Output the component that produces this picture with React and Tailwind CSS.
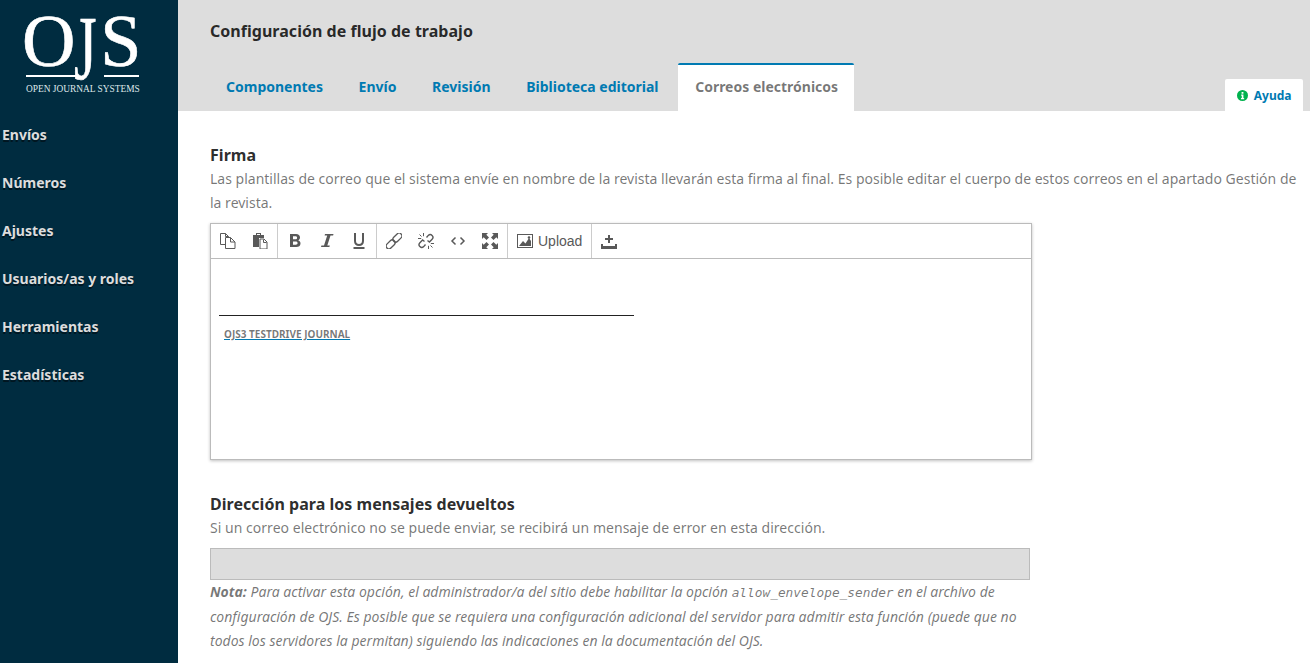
const navItems = ["Envíos", "Números", "Ajustes", "Usuarios/as y roles", "Herramientas", "Estadísticas"];
const tabs = ["Componentes", "Envío", "Revisión", "Biblioteca editorial"];

function Icon({ children }) {
  return (
    <svg width="16" height="16" viewBox="0 0 16 16" fill="#595959">
      {children}
    </svg>
  );
}

const CopyIcon = () => (
  <svg width="16" height="16" viewBox="0 0 16 16" fill="none" stroke="#595959">
    <path d="M5.500 11.500H.5v-11h5l3 3v1" />
    <path d="M5.500 .5v3h3" />
    <path d="M5.500 4.500h5l4.500 4.500v6.500H5.500z" />
    <path d="M10.500 4.500v4.500H15" />
  </svg>
);
const PasteIcon = () => (
  <Icon>
    <path fillRule="evenodd" d="M1 2h3V0h5v2h3v3H7v9H1zM5 1v1h3V1z" />
    <path d="M8 6h4l3 3v7H8z" fill="#fff" stroke="#595959" />
    <path d="M11.500 6.500v3h3" fill="none" stroke="#595959" />
  </Icon>
);
const BoldIcon = () => (
  <Icon>
    <path fillRule="evenodd" d="M3 1h6c2.500 0 4 1.300 4 3.400 0 1.400-.8 2.400-1.900 2.900 1.500.4 2.400 1.600 2.400 3.200 0 2.400-1.700 3.500-4.300 3.500H3zM6 3.200v3.100h2.400c1.100 0 1.700-.6 1.700-1.600s-.6-1.500-1.700-1.500zM6 8.400v3.400h2.700c1.200 0 1.900-.6 1.900-1.700s-.7-1.700-2-1.700z" />
  </Icon>
);
const ItalicIcon = () => (
  <Icon>
    <path d="M6 1h8.500l-.4 1.500h-2.600L8.300 12.500h2.500l-.4 1.500H2l.4-1.500h2.600L8.200 2.500H5.600z" />
  </Icon>
);
const UnderlineIcon = () => (
  <Icon>
    <path d="M3 0h2v8c0 2 1.200 3 3 3s3-1 3-3V0h2v8c0 3.200-2 5-5 5S3 11.200 3 8zM2.500 14h11v2h-11z" />
  </Icon>
);
const LinkIcon = () => (
  <svg width="16" height="16" viewBox="0 0 16 16" fill="none" stroke="#595959" strokeWidth="1.300">
    <rect x="8.600" y="-.6" width="5.600" height="10.400" rx="2.800" transform="rotate(45 11.400 4.600)" />
    <rect x="1.800" y="6.200" width="5.600" height="10.400" rx="2.800" transform="rotate(45 4.600 11.400)" />
  </svg>
);
const UnlinkIcon = () => (
  <svg width="16" height="16" viewBox="0 0 16 16" fill="none" stroke="#595959" strokeWidth="1.400">
    <path d="M8.500 4.500l1.800-2.100a2.700 2.700 0 0 1 3.800 0 2.700 2.700 0 0 1 0 3.800L11.400 9 9.500 7.500" />
    <path d="M7.500 11.500l-1.800 2.100a2.700 2.700 0 0 1-3.800 0 2.700 2.700 0 0 1 0-3.800L4.600 7l1.900 1.500" />
    <path d="M5.500 0v3.200M0 5.500h3.200M10.500 12.800V16M12.800 10.500H16M1.500 1.500l2 2M12.500 12.500l2 2" strokeWidth="1" />
  </svg>
);
const CodeIcon = () => (
  <svg width="16" height="16" viewBox="0 0 16 16" fill="none" stroke="#595959" strokeWidth="1.500">
    <path d="M5.500 4.500L2 8l3.500 3.500M10.500 4.500L14 8l-3.500 3.500" />
  </svg>
);
const FullscreenIcon = () => (
  <Icon>
    <path d="M0 0h6L4.300 1.700 7 4.500 4.500 7 1.700 4.300 0 6zM16 0v6l-1.700-1.700L11.500 7 9 4.500l2.700-2.800L10 0zM0 16v-6l1.700 1.700L4.500 9 7 11.500l-2.700 2.800L6 16zM16 16h-6l1.700-1.700L9 11.500 11.500 9l2.800 2.700L16 10z" />
  </Icon>
);
const ImageIcon = () => (
  <Icon>
    <path fillRule="evenodd" d="M0 1h16v14H0zM1 2v12h14V2z" />
    <path d="M2 13l4-5 2.500 2.500L12 5l2 3v5z" />
    <circle cx="12" cy="4.500" r="1.300" />
  </Icon>
);
const InsertIcon = () => (
  <Icon>
    <path d="M7 2h2v3h3v2H9v3H7V7H4V5h3zM0 11h2v2h12v-2h2v5H0z" />
  </Icon>
);

function ToolButton({ children }) {
  return <div className="flex h-[24px] w-[32px] items-center justify-center">{children}</div>;
}

function ToolGroup({ children, last }) {
  return (
    <div className={`flex h-full items-center px-[1px] ${last ? "" : "border-r border-[#ccc]"}`}>{children}</div>
  );
}

export default function App() {
  return (
    <div className="flex h-[663px] w-[1310px] overflow-hidden bg-white font-['Noto_Sans',sans-serif] text-[14px] text-[rgba(0,0,0,0.54)]">
      <aside className="w-[178px] shrink-0 bg-[#002c40]">
        <div className="flex h-[111px] flex-col pl-[26px] pt-[8px] text-white">
          <div className="flex h-[66px] font-['Liberation_Serif',serif] text-[74px] leading-[66px] [-webkit-text-stroke:0.6px_white]">
            <span className="-ml-[4px]">O</span>
            <span className="-ml-[1px] -mr-[3px] origin-top-left scale-x-[0.78] scale-y-[1.22]">J</span>
            <span>S</span>
          </div>
          <div className="flex w-[113px] justify-between pt-[1px]">
            <span className="h-[2px] w-[52px] bg-white" />
            <span className="h-[2px] w-[35px] bg-white" />
          </div>
          <div className="pt-[8px] font-['Liberation_Serif',serif] text-[9.400px] leading-[9px] whitespace-nowrap text-[#dfe7ea]">
            OPEN JOURNAL SYSTEMS
          </div>
        </div>
        <nav className="flex flex-col">
          {navItems.map((item) => (
            <a key={item} className="flex h-[48px] items-center pb-[2px] pl-[2px] text-[14px] font-bold text-[#ddd] [text-shadow:0_2px_0_rgba(0,0,0,0.5)]">
              {item}
            </a>
          ))}
        </nav>
      </aside>

      <div className="flex min-w-0 flex-1 flex-col">
        <header className="flex h-[111px] shrink-0 flex-col bg-[#ddd]">
          <h1 className="pl-[32px] pt-[21px] text-[16px] leading-[20px] font-bold tracking-[0.03px] text-[rgba(0,0,0,0.84)]">
            Configuración de flujo de trabajo
          </h1>
          <div className="mt-auto flex items-end justify-between">
            <div className="flex items-end pl-[32px]">
              {tabs.map((t) => (
                <a key={t} className="mr-[3.600px] flex h-[48px] items-center px-[16px] pb-[2px] text-[14px] font-bold text-[#007ab2]">
                  {t}
                </a>
              ))}
              <a className="flex h-[48px] items-center rounded-t-[2px] border-t-2 border-[#007ab2] bg-white pl-[17px] pr-[16px] pb-[4px] text-[14px] font-bold text-[rgba(0,0,0,0.54)]">
                Correos electrónicos
              </a>
            </div>
            <div className="mr-[7px] flex h-[32px] items-center gap-[6px] rounded-t-[2px] bg-white px-[11.500px] pt-[1px] text-[12px] font-bold text-[#007ab2]">
              <svg width="11" height="11" viewBox="0 0 12 12">
                <circle cx="6" cy="6" r="6" fill="#00b24e" />
                <path d="M5 2.200h2v1.800H5zM4.500 5h2.500v3.800h.8V10H4.300V8.800h.9V6.200h-.7z" fill="#fff" />
              </svg>
              Ayuda
            </div>
          </div>
        </header>

        <main className="pl-[32px] pr-[12px] pt-[33px]">
          <h2 className="mb-[1px] text-[16px] leading-[22px] font-bold tracking-[0.03px] text-[rgba(0,0,0,0.84)]">Firma</h2>
          <p className="leading-[24px] tracking-[0.006px]">
            Las plantillas de correo que el sistema envíe en nombre de la revista llevarán esta firma al final. Es posible editar el cuerpo de estos correos en el apartado Gestión de la revista.
          </p>

          <div className="mt-[8px] w-[822px] border border-[#bbb] shadow-[0_1px_3px_rgba(0,0,0,0.25)]">
            <div className="flex h-[35px] items-center border-b border-[#bbb]">
              <ToolGroup>
                <ToolButton><CopyIcon /></ToolButton>
                <ToolButton><PasteIcon /></ToolButton>
              </ToolGroup>
              <ToolGroup>
                <ToolButton><BoldIcon /></ToolButton>
                <ToolButton><ItalicIcon /></ToolButton>
                <ToolButton><UnderlineIcon /></ToolButton>
              </ToolGroup>
              <ToolGroup>
                <ToolButton><LinkIcon /></ToolButton>
                <ToolButton><UnlinkIcon /></ToolButton>
                <ToolButton><CodeIcon /></ToolButton>
                <ToolButton><FullscreenIcon /></ToolButton>
              </ToolGroup>
              <ToolGroup>
                <div className="flex items-center gap-[5px] px-[8px] font-['Liberation_Sans',sans-serif] text-[14px] text-[#595959]">
                  <ImageIcon />
                  Upload
                </div>
              </ToolGroup>
              <ToolGroup last>
                <ToolButton><InsertIcon /></ToolButton>
              </ToolGroup>
            </div>
            <div className="h-[200px] px-[8px] pt-[56px]">
              <div className="h-[1px] w-[415px] bg-[#222]" />
              <p className="pl-[5px] pt-[11px] text-[10px] leading-[14px] font-bold underline decoration-[#007ab2]">
                OJS3 TESTDRIVE JOURNAL
              </p>
            </div>
          </div>

          <h2 className="mb-[1px] mt-[33px] text-[16px] leading-[22px] font-bold tracking-[0.03px] text-[rgba(0,0,0,0.84)]">
            Dirección para los mensajes devueltos
          </h2>
          <p className="leading-[24px] tracking-[0.03px]">
            Si un correo electrónico no se puede enviar, se recibirá un mensaje de error en esta dirección.
          </p>
          <div className="mt-[8px] h-[32px] w-[820px] border border-[#bbb] bg-[#ddd]" />
          <p className="w-[820px] leading-[24.500px] tracking-[0.006px] italic">
            <b>Nota:</b> Para activar esta opción, el administrador/a del sitio debe habilitar la opción{" "}
            <code className="font-['DejaVu_Sans_Mono',monospace] text-[12.800px] leading-[0]">allow_envelope_sender</code> en el archivo de configuración de OJS. Es posible que se requiera una configuración adicional del servidor para admitir esta función (puede que no todos los servidores la permitan) siguiendo las indicaciones en la documentación del OJS.
          </p>
        </main>
      </div>
    </div>
  );
}
